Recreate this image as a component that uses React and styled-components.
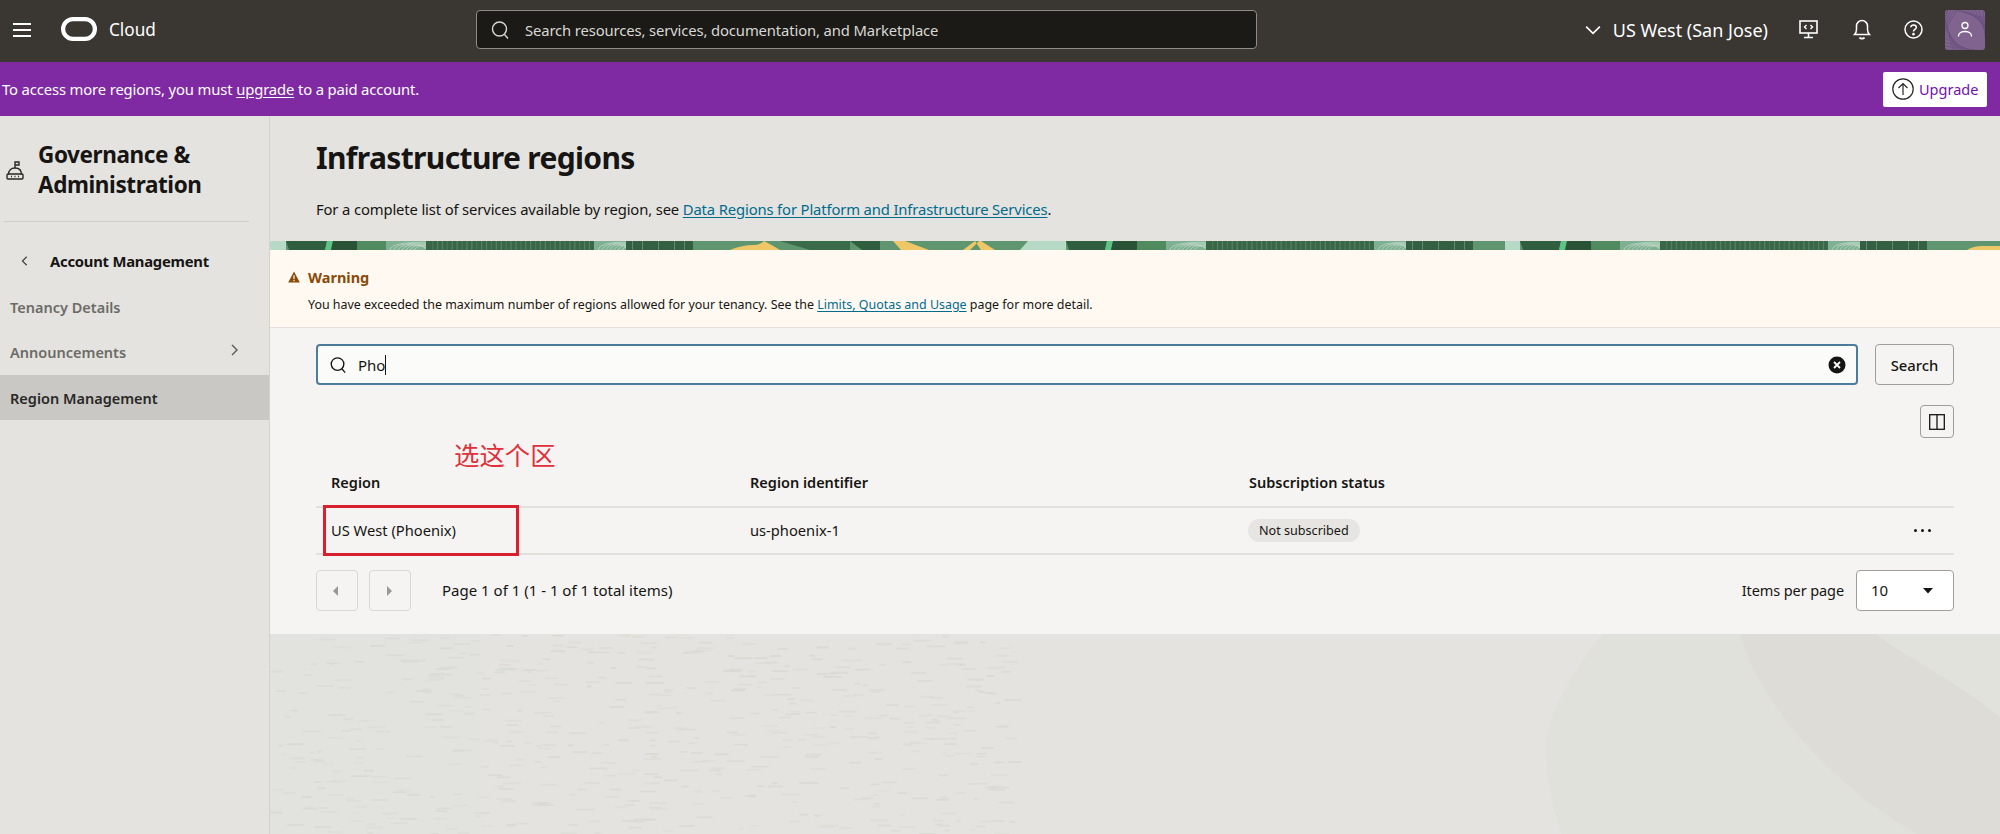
import React from 'react';
import styled, { createGlobalStyle } from 'styled-components';

const GlobalStyle = createGlobalStyle`
  html, body {
    margin: 0;
    padding: 0;
    background: #e4e3df;
  }
  body {
    font-family: "Noto Sans", "Open Sans", Arial, sans-serif;
    color: #161513;
  }
  * {
    box-sizing: border-box;
  }
  svg {
    flex: none;
  }
`;

const Shell = styled.div`
  display: flex;
  flex-direction: column;
  height: 834px;
  overflow: hidden;
`;

const Header = styled.header`
  align-items: center;
  background-color: #3a3632;
  color: #fff;
  display: flex;
  flex: none;
  height: 62px;
  padding: 0 15px 3px 12px;
`;

const IconSlot = styled.span`
  display: inline-flex;
  flex: none;
`;

const Brand = styled.div`
  align-items: center;
  display: flex;
  font-size: 17.2px;
  gap: 12px;
  margin-left: 29px;
  margin-top: -1px;
  width: 415px;
`;

const TopSearch = styled.div`
  align-items: center;
  background-color: #1b1a16;
  border: 1px solid #8e8c87;
  border-radius: 4px;
  color: #d9d8d4;
  display: flex;
  font-size: 14.8px;
  gap: 15px;
  height: 39px;
  letter-spacing: -0.12px;
  padding-left: 13px;
  width: 781px;
`;

const HeaderRight = styled.div`
  align-items: center;
  display: flex;
  margin-left: auto;
`;

const RegionPicker = styled.div`
  align-items: center;
  display: flex;
  font-size: 18px;
  gap: 12px;
  margin-right: 31px;
`;

const HeaderIcon = styled.span`
  display: inline-flex;
  margin-right: ${(p) => p.$gap}px;
`;

const PromoBar = styled.div`
  align-items: center;
  background-color: #7f2aa2;
  color: #fff;
  display: flex;
  flex: none;
  font-size: 14.8px;
  height: 54px;
  justify-content: space-between;
  letter-spacing: -0.13px;
  padding: 0 13px 0 2px;
  u {
    text-underline-offset: 2px;
  }
`;

const UpgradeButton = styled.button`
  align-items: center;
  background: #fff;
  border: none;
  border-radius: 2px;
  color: #7311ad;
  display: flex;
  font-family: inherit;
  font-size: 14.5px;
  gap: 5px;
  height: 35px;
  padding: 0 8px 0 9px;
  width: 104px;
`;

const Body = styled.div`
  display: flex;
  flex: 1;
  min-height: 0;
`;

const Sidebar = styled.nav`
  background-color: #e4e3df;
  border-right: 1px solid #d3d2cd;
  flex: none;
  padding-top: 24px;
  width: 270px;
`;

const SideTitle = styled.div`
  align-items: center;
  display: flex;
  font-size: 22.5px;
  font-weight: 700;
  gap: 14px;
  letter-spacing: -0.4px;
  line-height: 30px;
  margin-left: 6px;
`;

const SideDivider = styled.hr`
  border: none;
  border-top: 1px solid #cfcec9;
  margin: 21px 20px 0 4px;
`;

const BackRow = styled.div`
  align-items: center;
  display: flex;
  font-size: 14.8px;
  font-weight: 700;
  gap: 19px;
  height: 30px;
  letter-spacing: -0.23px;
  margin-top: 24px;
  padding-left: 19px;
`;

const NavItem = styled.div`
  align-items: center;
  background-color: ${(p) => (p.$active ? '#c9c8c5' : 'transparent')};
  color: ${(p) => (p.$active ? '#2a2825' : '#6d6b67')};
  display: flex;
  font-size: 14.5px;
  font-weight: 600;
  height: 45px;
  justify-content: space-between;
  padding: 0 28px 0 10px;
  svg {
    margin-bottom: 4px;
  }
`;

const NavList = styled.div`
  display: flex;
  flex-direction: column;
  margin-top: 8px;
  > div:nth-child(3) {
    margin-top: 1px;
  }
`;

const Main = styled.main`
  display: flex;
  flex: 1;
  flex-direction: column;
  min-width: 0;
`;

const PageHead = styled.div`
  flex: none;
  height: 125px;
  padding: 22px 46px 0;
`;

const Title = styled.h1`
  font-size: 30px;
  font-weight: 700;
  letter-spacing: -0.65px;
  line-height: 40px;
  margin: 0;
`;

const Lead = styled.p`
  font-size: 14.8px;
  letter-spacing: -0.135px;
  line-height: 22px;
  margin: 20px 0 0;
`;

const DocLink = styled.a`
  color: #006b8f;
  text-decoration: underline;
  text-underline-offset: 2px;
`;

const BannerStrip = styled.svg`
  display: block;
  flex: none;
  height: 9px;
  width: 1730px;
`;

const WarningBox = styled.section`
  background-color: #fff9f2;
  border-bottom: 1px solid #dfdeda;
  flex: none;
  height: 78px;
  padding: 15px 0 0 18px;
`;

const WarningTitle = styled.div`
  align-items: center;
  color: #8a4a08;
  display: flex;
  font-size: 14.5px;
  font-weight: 700;
  gap: 8px;
  line-height: 24px;
`;

const WarningText = styled.p`
  font-size: 12.45px;
  line-height: 20px;
  margin: 6px 0 0 20px;
`;

const Panel = styled.section`
  background-color: #f5f4f2;
  flex: none;
  height: 306px;
  padding: 16px 46px 0;
`;

const SearchRow = styled.div`
  display: flex;
  gap: 17px;
  height: 41px;
`;

const FilterInput = styled.div`
  align-items: center;
  background-color: #fbfbf9;
  border: 2px solid #4d7d9e;
  border-radius: 4px;
  display: flex;
  flex: 1;
  font-size: 15px;
  gap: 11px;
  padding: 0 10px 0 11px;
`;

const Typed = styled.span`
  border-right: 1px solid #161513;
  line-height: 20px;
`;

const Clear = styled.span`
  display: inline-flex;
  margin-left: auto;
`;

const OutlineButton = styled.button`
  align-items: center;
  background: ${(p) => p.$fill || 'transparent'};
  border: 1px solid ${(p) => (p.$faint ? '#d9d8d4' : '#a09e9a')};
  border-radius: 4px;
  color: #161513;
  display: flex;
  font-family: inherit;
  font-size: 14.8px;
  font-weight: 500;
  height: ${(p) => p.$h}px;
  justify-content: center;
  padding: 0;
  width: ${(p) => p.$w}px;
`;

const ToolRow = styled.div`
  display: flex;
  justify-content: flex-end;
  margin-top: 20px;
`;

const Table = styled.div`
  margin-top: 21px;
  position: relative;
`;

const TableRow = styled.div`
  align-items: center;
  border-bottom: 2px solid #e2e1de;
  display: grid;
  font-size: ${(p) => (p.$head ? '14.5px' : '14.7px')};
  font-weight: ${(p) => (p.$head ? 600 : 400)};
  grid-template-columns: 419px 499px 1fr 64px;
  height: ${(p) => (p.$head ? 49 : 47)}px;
`;

const Cell = styled.div`
  padding: 0 0 2px 15px;
`;

const Pill = styled.span`
  background-color: #e6e5e2;
  border-radius: 12px;
  display: inline-block;
  font-size: 12.6px;
  line-height: 23px;
  margin: 2px 0 0 -1px;
  padding: 0 11px;
`;

const Dots = styled.div`
  display: flex;
  gap: 4px;
  justify-content: center;
  span {
    background: #161513;
    border-radius: 50%;
    height: 3px;
    width: 3px;
  }
`;

const Annotation = styled.span`
  color: #e0303c;
  font-family: "Noto Sans CJK SC", "Noto Sans", sans-serif;
  font-size: 25.4px;
  left: 138px;
  line-height: 32px;
  position: absolute;
  top: -21px;
`;

const RedBox = styled.div`
  border: 3px solid #d8202f;
  height: 51px;
  left: 7px;
  position: absolute;
  top: 46px;
  width: 196px;
`;

const Pager = styled.div`
  align-items: center;
  display: flex;
  font-size: 15px;
  margin-top: 15px;
`;

const PagerLabel = styled.span`
  padding-bottom: 2px;
`;

const PageButtons = styled.div`
  display: flex;
  gap: 11px;
  margin-right: 31px;
`;

const PerPage = styled.div`
  align-items: center;
  display: flex;
  font-size: 14.5px;
  gap: 12px;
  letter-spacing: -0.1px;
  margin-left: auto;
`;

const SelectBox = styled.div`
  align-items: center;
  background: #fff;
  border: 1px solid #a09e9a;
  border-radius: 4px;
  display: flex;
  font-size: 15px;
  height: 41px;
  justify-content: space-between;
  padding: 0 19px 0 14px;
  width: 98px;
`;

const Backdrop = styled.svg`
  display: block;
  flex: 1;
  min-height: 0;
  width: 1730px;
`;

function HamburgerIcon() {
  return (
    <svg width="20" height="16" viewBox="0 0 20 16" fill="none" stroke="#fff" strokeWidth="2">
      <path d="M1 2h18M1 8h18M1 14h18" />
    </svg>
  );
}

function SearchGlyph({ size = 20, color = '#d9d8d4', width = 1.4 }) {
  return (
    <svg width={size} height={size} viewBox="0 0 20 20" fill="none" stroke={color} strokeWidth={width}>
      <circle cx="9.5" cy="9" r="7" />
      <path d="M14.5 14.5l3.5 4" />
    </svg>
  );
}

function CloudShellIcon() {
  return (
    <svg width="19" height="19" viewBox="0 0 19 19" fill="none" stroke="#fff" strokeWidth="1.6">
      <rect x="1" y="1" width="17" height="12" />
      <path d="M9.5 13v4M5 17.5h9" />
      <path d="M7.5 5L5.5 7l2 2M11.5 5l2 2-2 2" strokeWidth="1.4" />
    </svg>
  );
}

function BellIcon() {
  return (
    <svg width="18" height="21" viewBox="0 0 18 21" fill="none" stroke="#fff" strokeWidth="1.5">
      <path d="M1.5 15.5h15c-1.5-1.5-2-3-2-5V7a5.5 5.5 0 0 0-11 0v3.500c0 2-.5 3.500-2 5z" />
      <path d="M6.500 18.500c1 1.500 4 1.500 5 0" strokeWidth="1.800" />
    </svg>
  );
}

function HelpIcon() {
  return (
    <svg width="19" height="19" viewBox="0 0 19 19" fill="none" stroke="#fff" strokeWidth="1.5">
      <circle cx="9.500" cy="9.500" r="8.500" />
      <path d="M6.800 7.300c.3-3.100 5.500-3 5.500.1 0 2-2.800 2-2.800 4.100" />
      <circle cx="9.500" cy="14.200" r=".6" fill="#fff" />
    </svg>
  );
}

function AvatarTile() {
  const lines = [0, 1, 2, 3, 4, 5, 6, 7, 8];
  return (
    <svg width="40" height="40" viewBox="0 0 40 40">
      <rect width="40" height="40" rx="3" fill="#80648f" />
      <g stroke="#69517f" strokeWidth="0.800" fill="none">
        {lines.map((i) => (
          <path key={i} d={`M${10 + i * 4} 0 L40 ${8 + i * 2.500}`} />
        ))}
        {lines.map((i) => (
          <path key={`b${i}`} d={`M0 ${8 + i * 4} L${8 + i * 3} 40`} />
        ))}
        {lines.slice(0, 5).map((i) => (
          <path key={`c${i}`} d={`M${i * 3} 0 L0 ${i * 4 + 4}`} />
        ))}
      </g>
      <g fill="none" stroke="#fff" strokeWidth="1.300">
        <circle cx="20" cy="15.500" r="3" />
        <path d="M13.500 26.500v-.500c0-6 13-6 13 0v.500" />
      </g>
    </svg>
  );
}

function UpgradeIcon() {
  return (
    <svg width="22" height="22" viewBox="0 0 22 22" fill="none" stroke="#2a2825" strokeWidth="1.200">
      <circle cx="11" cy="11" r="10.200" />
      <path d="M11 17V5.500M6.500 10L11 5.500 15.500 10" />
    </svg>
  );
}

function GovernanceIcon() {
  return (
    <svg width="18" height="19" viewBox="0 0 18 19" fill="none" stroke="#2a2825" strokeWidth="1.400">
      <path d="M9 7V1h4v3H9" />
      <path d="M2.500 13.500C2.500 9.500 5 7 9 7s6.500 2.500 6.500 6.500" />
      <rect x="1" y="13" width="16" height="5" rx="1" />
      <path d="M5 15.500h1M8.500 15.500h1M12 15.500h1" />
    </svg>
  );
}

function Chevron({ dir = 'right', color = '#45433f', size = 14 }) {
  const d = { left: 'M9 2L4 7l5 5', right: 'M5 2l5 5-5 5', down: 'M1 4l6 6 6-6' }[dir];
  return (
    <svg width={size} height={size} viewBox="0 0 14 14" fill="none" stroke={color} strokeWidth="1.400">
      <path d={d} />
    </svg>
  );
}

function WarningGlyph() {
  return (
    <svg width="12" height="12" viewBox="0 0 12 12">
      <path d="M6 .5L11.800 11.500H.2z" fill="#8a4a08" />
      <rect x="5.400" y="4.200" width="1.200" height="4" fill="#fff9f2" />
      <rect x="5.400" y="9" width="1.200" height="1.200" fill="#fff9f2" />
    </svg>
  );
}

function ClearGlyph() {
  return (
    <svg width="18" height="18" viewBox="0 0 18 18">
      <circle cx="9" cy="9" r="8.500" fill="#161513" />
      <path d="M6 6l6 6M12 6l-6 6" stroke="#fff" strokeWidth="1.800" />
    </svg>
  );
}

function ColumnsGlyph() {
  return (
    <svg width="16" height="16" viewBox="0 0 16 16" fill="none" stroke="#161513" strokeWidth="1.300">
      <rect x=".7" y=".7" width="14.600" height="14.600" />
      <path d="M8 .7v14.600" />
    </svg>
  );
}

function Triangle({ dir }) {
  const d = { left: 'M7 1v10L2 6z', right: 'M3 1v10l5-5z', down: 'M1 1h10L6 6.500z' }[dir];
  const fill = dir === 'down' ? '#161513' : '#9a9894';
  return (
    <svg width="12" height={dir === 'down' ? 8 : 12} viewBox={dir === 'down' ? '0 0 12 8' : '0 0 12 12'}>
      <path d={d} fill={fill} />
    </svg>
  );
}

function LeafPatch({ x, w }) {
  const rows = [1, 2, 3, 4, 5, 6, 7];
  return (
    <g>
      <rect x={x} width={w} height="9" fill="#7fb091" />
      {rows.map((r) => (
        <path
          key={r}
          d={`M${x + r * 4} 9 Q${x + r * 5} 1 ${x + w} ${r * 1.200}`}
          fill="none"
          stroke="#b9d6c3"
          strokeWidth="0.800"
        />
      ))}
    </g>
  );
}

function StripeGroup({ x }) {
  const bars = Array.from({ length: 34 }, (_, i) => i);
  return (
    <g transform={`translate(${x} 0)`}>
      <path d="M0 0h41l-2 9H3z" fill="#2f5f3f" />
      <path d="M39 9l2-9h6l-2 9z" fill="#5ec486" />
      <path d="M45 9l2-9h24v9z" fill="#2a5237" />
      <rect x="71" width="30" height="9" fill="#4f8b5f" />
      <LeafPatch x={100} w={40} />
      <rect x="140" width="200" height="9" fill="#3a6648" />
      {bars.map((i) => (
        <rect key={i} x={146 + i * 4.900} width="1.300" height="9" fill="#5d8d6b" opacity={i % 3 === 0 ? 0.4 : 0.7} />
      ))}
      <LeafPatch x={308} w={32} />
      <rect x="340" width="67" height="9" fill="#355f42" />
      {[346, 356, 372, 388, 398].map((b) => (
        <rect key={b} x={b} width="1" height="9" fill="#5d8d6b" />
      ))}
    </g>
  );
}

function Banner() {
  return (
    <BannerStrip viewBox="0 0 1730 9" preserveAspectRatio="none">
      <rect width="1730" height="9" fill="#5f9670" />
      <rect width="16" height="9" fill="#b6dac6" />
      <StripeGroup x={16} />
      <path d="M460 9q12-5 24-5 6 0 10-4 6 3 16 9z" fill="#f0c767" />
      <path d="M510 0h70v9h-40z" fill="#3a6c4a" />
      <path d="M580 0h30v9h-18z" fill="#2f5f3f" />
      <path d="M623 0h12l24 9h-28z" fill="#f0c767" />
      <path d="M705 0l-12 9h7l9-9zM711 0l14 9h-14l-6-9z" fill="#f0c767" />
      <path d="M758 0h38v9h-46z" fill="#b6dac6" />
      <StripeGroup x={796} />
      <rect x="1235" width="15" height="9" fill="#b6dac6" />
      <StripeGroup x={1250} />
      <path d="M1697 9q6-4 16-4h17v4z" fill="#f0c767" />
    </BannerStrip>
  );
}

// small seeded generator so the dashes stay put between runs
function makeDashes(count) {
  let seed = 47;
  const next = () => {
    seed = (seed * 16807) % 2147483647;
    return seed / 2147483647;
  };
  return Array.from({ length: count }, () => ({
    x: next() * 740,
    y: next() * 200,
    w: 5 + next() * 14,
    o: 0.45 + next() * 0.55,
  }));
}

const dashes = makeDashes(560);

function BackdropArt() {
  return (
    <Backdrop viewBox="0 0 1730 200" preserveAspectRatio="none">
      <rect width="1730" height="200" fill="#e4e3df" />
      <rect width="210" height="200" fill="#e2e3df" />
      <g fill="#dadad5">
        {dashes.map((d, i) => (
          <rect key={i} x={d.x} y={d.y} width={d.w} height="1.800" rx="0.900" opacity={d.o} />
        ))}
      </g>
      <path d="M1333 0C1300 40 1270 90 1277 129C1278 155 1285 180 1291 200L1730 200L1730 0Z" fill="#e0e1db" />
      <path d="M1470 0C1490 70 1560 150 1647 200L1730 200L1730 83C1690 50 1640 25 1605 0Z" fill="#dddcd7" />
      <path d="M1605 0L1730 0L1730 83C1690 50 1640 25 1605 0Z" fill="#e2e2dd" />
    </Backdrop>
  );
}

export default function App() {
  return (
    <Shell>
      <GlobalStyle />
      <Header>
        <IconSlot><HamburgerIcon /></IconSlot>
        <Brand>
          <svg width="36" height="24" viewBox="0 0 36 24" fill="none" stroke="#fff" strokeWidth="4.200">
            <rect x="2.100" y="2.100" width="31.800" height="19.800" rx="9.900" />
          </svg>
          <span>Cloud</span>
        </Brand>
        <TopSearch>
          <SearchGlyph />
          <span>Search resources, services, documentation, and Marketplace</span>
        </TopSearch>
        <HeaderRight>
          <RegionPicker>
            <Chevron dir="down" color="#fff" size={16} />
            <span>US West (San Jose)</span>
          </RegionPicker>
          <HeaderIcon $gap={35}><CloudShellIcon /></HeaderIcon>
          <HeaderIcon $gap={33}><BellIcon /></HeaderIcon>
          <HeaderIcon $gap={22}><HelpIcon /></HeaderIcon>
          <AvatarTile />
        </HeaderRight>
      </Header>
      <PromoBar>
        <span>To access more regions, you must <u>upgrade</u> to a paid account.</span>
        <UpgradeButton><UpgradeIcon />Upgrade</UpgradeButton>
      </PromoBar>
      <Body>
        <Sidebar>
          <SideTitle>
            <IconSlot><GovernanceIcon /></IconSlot>
            <span>Governance &amp;<br />Administration</span>
          </SideTitle>
          <SideDivider />
          <BackRow>
            <Chevron dir="left" size={12} />
            <span>Account Management</span>
          </BackRow>
          <NavList>
            <NavItem>Tenancy Details</NavItem>
            <NavItem>Announcements<Chevron dir="right" color="#5a5854" /></NavItem>
            <NavItem $active>Region Management</NavItem>
          </NavList>
        </Sidebar>
        <Main>
          <PageHead>
            <Title>Infrastructure regions</Title>
            <Lead>
              For a complete list of services available by region, see{' '}
              <DocLink>Data Regions for Platform and Infrastructure Services</DocLink>.
            </Lead>
          </PageHead>
          <Banner />
          <WarningBox>
            <WarningTitle><WarningGlyph />Warning</WarningTitle>
            <WarningText>
              You have exceeded the maximum number of regions allowed for your tenancy. See the{' '}
              <DocLink>Limits, Quotas and Usage</DocLink> page for more detail.
            </WarningText>
          </WarningBox>
          <Panel>
            <SearchRow>
              <FilterInput>
                <SearchGlyph size={18} color="#161513" width={1.500} />
                <Typed>Pho</Typed>
                <Clear><ClearGlyph /></Clear>
              </FilterInput>
              <OutlineButton $w={79} $h={41}>Search</OutlineButton>
            </SearchRow>
            <ToolRow>
              <OutlineButton $w={34} $h={33}><ColumnsGlyph /></OutlineButton>
            </ToolRow>
            <Table>
              <Annotation>选这个区</Annotation>
              <TableRow $head>
                <Cell>Region</Cell>
                <Cell>Region identifier</Cell>
                <Cell>Subscription status</Cell>
              </TableRow>
              <TableRow>
                <Cell>US West (Phoenix)</Cell>
                <Cell>us-phoenix-1</Cell>
                <Cell><Pill>Not subscribed</Pill></Cell>
                <Dots><span /><span /><span /></Dots>
              </TableRow>
              <RedBox />
            </Table>
            <Pager>
              <PageButtons>
                <OutlineButton $w={42} $h={41} $faint><Triangle dir="left" /></OutlineButton>
                <OutlineButton $w={42} $h={41} $faint><Triangle dir="right" /></OutlineButton>
              </PageButtons>
              <PagerLabel>Page 1 of 1 (1 - 1 of 1 total items)</PagerLabel>
              <PerPage>
                <PagerLabel>Items per page</PagerLabel>
                <SelectBox>
                  <PagerLabel>10</PagerLabel>
                  <Triangle dir="down" />
                </SelectBox>
              </PerPage>
            </Pager>
          </Panel>
          <BackdropArt />
        </Main>
      </Body>
    </Shell>
  );
}
